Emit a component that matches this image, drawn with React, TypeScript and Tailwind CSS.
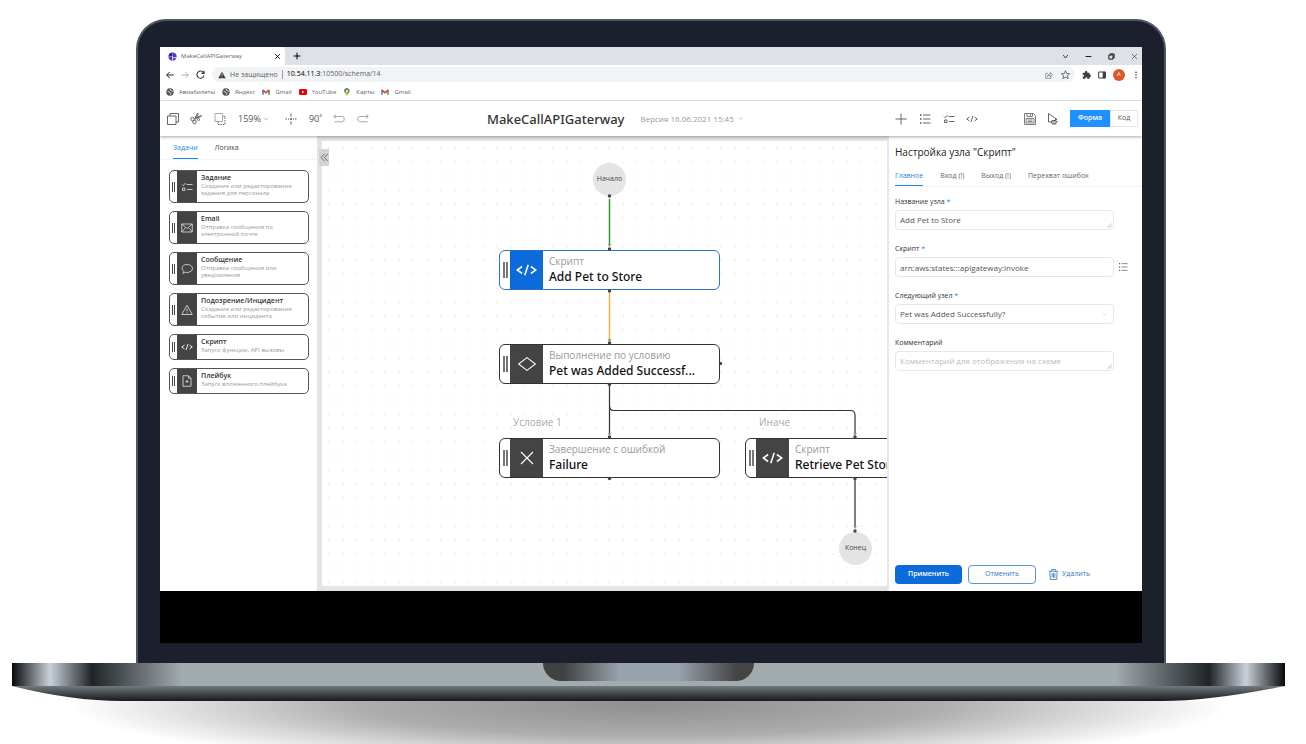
import type { ReactNode } from 'react';
import clsx from 'clsx';

interface IconProps {
  className?: string;
}

interface SvgProps extends IconProps {
  box?: string;
  children: ReactNode;
}

function Svg({ className, box = '0 0 24 24', children }: SvgProps) {
  return (
    <svg className={clsx('shrink-0', className)} viewBox={box} fill="none" stroke="currentColor" strokeWidth="1.8" aria-hidden="true">
      {children}
    </svg>
  );
}

const CodeIcon = ({ className }: IconProps) => (
  <Svg className={className} box="0 0 24 16">
    <path d="M7 4 1.500 8 7 12M17 4l5.500 4L17 12M14 2l-4 12" />
  </Svg>
);

const ChecklistIcon = ({ className }: IconProps) => (
  <Svg className={className}>
    <path d="M2 7l2.500 2.500L9 4M11 7h12M3 14h5v5H3zM12 17h11" />
  </Svg>
);

const ListIcon = ({ className }: IconProps) => (
  <Svg className={className}>
    <path d="M2 4h3M2 12h3M2 20h3" strokeWidth="3" />
    <path d="M8 4h15M8 12h15M8 20h15" />
  </Svg>
);

const MailIcon = ({ className }: IconProps) => (
  <Svg className={className}>
    <path d="M1.500 4h21v16h-21zM1.500 4 12 13 22.500 4M1.500 20 9 11M22.500 20 15 11" />
  </Svg>
);

const ChatIcon = ({ className }: IconProps) => (
  <Svg className={className}>
    <path d="M4 21l1.500-4.500C-1 11 2 3 12 3s14 8 8.500 13C17 19 12 19.500 8.500 18.500Z" />
  </Svg>
);

const WarningIcon = ({ className }: IconProps) => (
  <Svg className={className}>
    <path d="M12 2.500 1.500 21h21zM12 9v6M12 17v2" strokeLinejoin="round" />
  </Svg>
);

const FileIcon = ({ className }: IconProps) => (
  <Svg className={className}>
    <path d="M4 1.500h11l5 5v16H4zM15 1.500v5h5M12 10v6M9 13h6" />
  </Svg>
);

const DiamondIcon = ({ className }: IconProps) => (
  <Svg className={className} box="0 0 24 20">
    <path d="M12 2 22.500 10 12 18 1.500 10Z" strokeWidth="1.3" />
  </Svg>
);

const CrossIcon = ({ className }: IconProps) => (
  <Svg className={className}>
    <path d="M3 3l18 18M21 3 3 21" strokeWidth="1.6" />
  </Svg>
);

const ChevronIcon = ({ className }: IconProps) => (
  <Svg className={className}>
    <path d="M4 7l8 10 8-10" strokeWidth="2.5" />
  </Svg>
);

const UndoIcon = ({ className }: IconProps) => (
  <Svg className={className} box="0 0 24 18">
    <path d="M6 1 1.500 5 6 9M1.500 5H19q3.500 0 3.500 5t-3.500 5.500H3" />
  </Svg>
);

const GlobeIcon = ({ className }: IconProps) => (
  <Svg className={className}>
    <circle cx="12" cy="12" r="11" fill="#4b4f54" stroke="none" />
    <path d="M4 9q6 1 6 4t3 2 1 5M13 3q-2 4 2 5t6 3" stroke="#fff" strokeWidth="2.5" />
  </Svg>
);

const GmailIcon = ({ className }: IconProps) => (
  <Svg className={className} box="0 0 24 18">
    <path d="M3 17V3" stroke="#4285f4" strokeWidth="5" />
    <path d="M21 17V3" stroke="#34a853" strokeWidth="5" />
    <path d="M2 3l10 8 10-8" stroke="#ea4335" strokeWidth="5" />
  </Svg>
);

const YoutubeIcon = ({ className }: IconProps) => (
  <Svg className={className} box="0 0 24 18">
    <rect width="24" height="18" rx="4" fill="#e60000" stroke="none" />
    <path d="M9 5l7 4-7 4z" fill="#fff" stroke="none" />
  </Svg>
);

const MapsIcon = ({ className }: IconProps) => (
  <Svg className={className}>
    <path d="M12 24C11 17 4 15 4 9a8 8 0 0 1 16 0c0 6-7 8-8 15Z" fill="#34a853" stroke="none" />
    <path d="M4 9a8 8 0 0 1 8-8v8l-6 6Q4 12 4 9Z" fill="#4285f4" stroke="none" />
    <path d="M5 5q3-4 7-4v8Z" fill="#ea4335" stroke="none" />
    <path d="M6 15l6-6 2 8-2 7Z" fill="#fbbc04" stroke="none" />
    <circle cx="12" cy="9" r="3" fill="#fff" stroke="none" />
  </Svg>
);

const bookmarks = [
  { label: 'Авиабилеты', icon: GlobeIcon },
  { label: 'Яндекс', icon: GlobeIcon },
  { label: 'Gmail', icon: GmailIcon },
  { label: 'YouTube', icon: YoutubeIcon },
  { label: 'Карты', icon: MapsIcon },
  { label: 'Gmail', icon: GmailIcon },
];

const tasks = [
  { title: 'Задание', text: 'Создание или редактирование задания для персонала', icon: ChecklistIcon, tall: true },
  { title: 'Email', text: 'Отправка сообщения по электронной почте', icon: MailIcon, tall: true },
  { title: 'Сообщение', text: 'Отправка сообщения или уведомления', icon: ChatIcon, tall: true },
  { title: 'Подозрение/Инцидент', text: 'Создание или редактирование события или инцидента', icon: WarningIcon, tall: true },
  { title: 'Скрипт', text: 'Запуск функции, API вызовы', icon: CodeIcon, tall: false },
  { title: 'Плейбук', text: 'Запуск вложенного плейбука', icon: FileIcon, tall: false },
];

function BrowserBar() {
  return (
    <header className="text-[6px] text-[#5f6368]">
      <div className="flex h-[18px] items-center bg-[#dee1e6]">
        <div className="flex h-full w-[125px] items-center gap-1 rounded-tr bg-white pl-2 pr-1">
          <Svg className="size-[9px]">
            <circle cx="12" cy="12" r="11" fill="#5a35c8" stroke="none" />
            <path d="M12 1v22M1 11h11M12 15h11" stroke="#fff" strokeWidth="2" />
            <path d="M12 1v10H2Q3 2 12 1Z" fill="#2f1d9c" stroke="none" />
          </Svg>
          <span className="flex-1">MakeCallAPIGaterway</span>
          <button aria-label="Закрыть вкладку">
            <Svg className="size-[7px] text-black"><path d="M4 4l16 16M20 4 4 20" strokeWidth="3" /></Svg>
          </button>
        </div>
        <button aria-label="Новая вкладка" className="ml-2">
          <Svg className="size-2 text-black"><path d="M12 2v20M2 12h20" strokeWidth="3" /></Svg>
        </button>
        <div className="ml-auto flex items-center gap-4 pr-1 text-black">
          <button aria-label="Вкладки"><ChevronIcon className="size-[7px]" /></button>
          <button aria-label="Свернуть"><Svg className="size-[7px]"><path d="M2 12h20" strokeWidth="3" /></Svg></button>
          <button aria-label="Развернуть"><Svg className="size-[7px]"><path d="M3 7h14v14H3zM7 7V3h14v14h-4" strokeWidth="3" /></Svg></button>
          <button aria-label="Закрыть"><CrossIcon className="size-[7px]" /></button>
        </div>
      </div>

      <div className="flex h-[19px] items-center gap-[7px] pl-[6px] pr-[2px]">
        <button aria-label="Назад"><Svg className="size-2 text-black"><path d="M23 12H2M11 3l-9 9 9 9" strokeWidth="2.5" /></Svg></button>
        <button aria-label="Вперёд"><Svg className="size-2 text-gray-400"><path d="M1 12h21M13 3l9 9-9 9" strokeWidth="2.5" /></Svg></button>
        <button aria-label="Обновить"><Svg className="size-[9px] text-[#333]"><path d="M20 7a9.500 9.500 0 1 0 1.500 7M21.500 2v7h-7" strokeWidth="2.800" /></Svg></button>
        <div className="flex h-[15px] flex-1 items-center rounded-full bg-[#f1f3f4] pl-[6px] pr-[5px]">
          <Svg className="mr-1 size-2"><path d="M12 2 1 22h22z" fill="#333" stroke="none" /><path d="M12 8v7M12 17v3" stroke="#fff" strokeWidth="2" /></Svg>
          <span className="border-r border-gray-400 pr-1 text-[7px] leading-[9px]">Не защищено</span>
          <span className="ml-1 flex-1 text-[7px]"><span className="text-black">10.54.11.3</span>:10500/schema/14</span>
          <button aria-label="Поделиться" className="mr-2"><Svg className="size-2"><path d="M9 7H2v15h16v-5M7 17q1-8 9-8V4l7 7-7 6v-4q-6 0-9 4Z" /></Svg></button>
          <button aria-label="В закладки"><Svg className="size-[9px] text-[#333]"><path d="M12 2l3 7 8 1-6 5 2 8-7-4-7 4 2-8-6-5 8-1z" /></Svg></button>
        </div>
        <button aria-label="Расширения"><Svg className="size-[9px]"><path d="M2 7h6c-2-6 8-6 6 0h6v5c5-1 5 8 0 7v4h-6c1-5-6-5-5 0H2v-6c5 1 5-5 0-4Z" fill="#3c4043" stroke="none" /></Svg></button>
        <button aria-label="Панель"><Svg className="size-2 text-[#3c4043]"><path d="M2 3h20v18H2z" strokeWidth="3" /><path d="M15 3h7v18h-7z" fill="currentColor" /></Svg></button>
        <span className="flex size-3 items-center justify-center rounded-full bg-[#e2552b] text-white">А</span>
        <button aria-label="Меню" className="w-2"><Svg className="mx-auto size-2 text-black"><path d="M12 2v4M12 10v4M12 18v4" strokeWidth="3" /></Svg></button>
      </div>

      <nav className="flex h-[17px] items-center gap-[7px] border-b border-gray-200 pl-[6px]">
        {bookmarks.map(({ label, icon: Icon }, i) => (
          <a key={i} href="#" className="flex items-center gap-[5px]">
            <Icon className="size-2" />
            {label}
          </a>
        ))}
      </nav>
    </header>
  );
}

function Toolbar() {
  return (
    <div className="relative z-10 flex h-[35px] items-center bg-white text-[#555] shadow-[0_1px_3px_rgba(0,0,0,0.35)]">
      <div className="flex w-[327px] items-center pl-[7px] text-[9px]">
        <button aria-label="Копировать" className="mr-[11px]"><Svg className="size-3"><path d="M1 6h17v17H1zM6 6V1h17v17h-5" /></Svg></button>
        <button aria-label="Вырезать" className="mr-3">
          <Svg className="size-3">
            <path d="M9 11 20 8q3-1 3-3l-13 5M11 13l5-10q1-2-1-3l-5 11" />
            <circle cx="5" cy="12" r="3.500" />
            <circle cx="9" cy="18" r="3.500" />
            <circle cx="17" cy="13" r="2" />
          </Svg>
        </button>
        <button aria-label="Дублировать" className="mr-3"><Svg className="size-3 text-gray-400"><path d="M2 1h15v16H2z" /><path d="M8 18v5h14V7h-4" strokeDasharray="3 2" stroke="#555" /></Svg></button>
        <button className="mr-4 flex items-center gap-[2px]">159% <ChevronIcon className="size-[6px] text-gray-400" /></button>
        <button aria-label="Центрировать" className="mr-3"><Svg className="size-3"><path d="M12 1v6M12 17v6M1 12h3M6 12h2M16 12h2M20 12h3M12 10v4M10 12h4" strokeWidth="2" /></Svg></button>
        <button className="mr-[11px]">90˚</button>
        <button aria-label="Отменить действие" className="mr-3"><UndoIcon className="h-[9px] w-3 text-gray-400" /></button>
        <button aria-label="Повторить действие"><UndoIcon className="h-[9px] w-3 -scale-x-100 text-gray-400" /></button>
      </div>

      <div className="flex flex-1 items-center gap-4">
        <h1 className="font-['Noto_Sans','Open_Sans',sans-serif] text-[13px] font-medium leading-5 text-[#333]">MakeCallAPIGaterway</h1>
        <button className="flex items-center gap-1 text-[8px] text-[#999]">
          Версия 16.06.2021 15:45 <ChevronIcon className="size-[5px]" />
        </button>
      </div>

      <div className="flex w-[247px] items-center pr-1">
        <button aria-label="Добавить" className="mr-3"><Svg className="size-3"><path d="M12 1v22M1 12h22" /></Svg></button>
        <button aria-label="Список" className="mr-3"><ListIcon className="size-3" /></button>
        <button aria-label="Проверка" className="mr-[11px]"><ChecklistIcon className="size-3" /></button>
        <button aria-label="Код узла"><CodeIcon className="h-[10px] w-3" /></button>
        <button aria-label="Сохранить" className="ml-auto mr-[11px]"><Svg className="size-3"><path d="M2 1h17l4 4v18H1V1zM6 1v6h11V1M13 2v4M4 11h16v9H4zM7 14h10M7 17h10" strokeWidth="1.500" /></Svg></button>
        <button aria-label="Запустить" className="mr-[11px]"><Svg className="size-3"><path d="M10 18H3V1l17 12h-4" /><path d="M10 15h8v7h-8zM8 17h2M18 17h3M14 14v8" /></Svg></button>
        <button className="h-[17px] w-10 bg-[#1e90ff] text-[7px] font-semibold text-white">Форма</button>
        <button className="h-[17px] w-7 border border-gray-200 text-[7px]">Код</button>
      </div>
    </div>
  );
}

function Sidebar() {
  return (
    <aside className="w-[157px] shrink-0 bg-white">
      <div className="flex h-6 gap-[17px] border-b border-gray-100 pl-[13px] text-[7px] text-[#444]">
        <button className="border-b border-[#1e88e5] pt-[3px] text-[#1e88e5]">Задачи</button>
        <button className="border-b border-transparent pt-[3px]">Логика</button>
      </div>
      <div className="mt-[10px] flex flex-col gap-2 px-[9px]">
        {tasks.map(({ title, text, icon: Icon, tall }) => (
          <div key={title} className={clsx('flex w-[140px] overflow-hidden rounded-[5px] border border-[#555]', tall ? 'h-[33px]' : 'h-[26px]')}>
            <div className="flex w-[7px] items-center justify-center">
              <span className="h-[10px] w-[3px] border-x border-[#444]" />
            </div>
            <div className="flex w-5 items-center justify-center bg-[#444] text-gray-300">
              <Icon className={clsx('w-3', Icon === CodeIcon ? 'h-2 text-white' : 'h-3')} />
            </div>
            <div className="flex-1 pl-1 pt-[2px]">
              <p className="text-[7px] font-semibold leading-[10px] text-[#333]">{title}</p>
              <p className="text-[6px] leading-[7px] text-[#999]">{text}</p>
            </div>
          </div>
        ))}
      </div>
    </aside>
  );
}

interface NodeProps {
  kind: string;
  title: string;
  icon: ReactNode;
  place: string;
  active?: boolean;
}

function FlowNode({ kind, title, icon, place, active }: NodeProps) {
  return (
    <div className={clsx('absolute flex h-10 w-[221px] overflow-hidden rounded-md border bg-white', active ? 'border-[#2f74c0]' : 'border-[#333]', place)}>
      <div className="flex w-[10px] items-center justify-center">
        <span className="h-4 w-[5px] border-x-2 border-[#777]" />
      </div>
      <div className={clsx('flex w-[33px] items-center justify-center text-white', active ? 'bg-[#0b6bdb]' : 'bg-[#444]')}>{icon}</div>
      <div className="min-w-0 flex-1 pl-[6px] pt-[3px]">
        <p className="text-[10px] leading-[15px] text-[#999]">{kind}</p>
        <p className="whitespace-nowrap font-['Noto_Sans','Open_Sans',sans-serif] text-[12px] font-medium leading-[15px] text-[#111]">{title}</p>
      </div>
    </div>
  );
}

function Canvas() {
  return (
    <main className="relative flex min-w-0 flex-1 bg-[#e4e4e4] py-[5px] pl-[5px]">
      <div className="relative min-w-0 flex-1 overflow-hidden bg-white bg-[radial-gradient(#f3f3f3_1px,transparent_1px)] bg-[size:14px_14px]">
        <div className="absolute left-[271px] top-[22px] flex size-[33px] items-center justify-center rounded-full bg-[#e4e4e4] text-[7px] text-[#444]">Начало</div>
        <FlowNode active kind="Скрипт" title="Add Pet to Store" place="left-[177px] top-[109px]" icon={<CodeIcon className="h-[14px] w-[21px]" />} />
        <FlowNode kind="Выполнение по условию" title="Pet was Added Successf..." place="left-[177px] top-[203px]" icon={<DiamondIcon className="h-4 w-5" />} />
        <FlowNode kind="Завершение с ошибкой" title="Failure" place="left-[177px] top-[297px]" icon={<CrossIcon className="size-4" />} />
        <FlowNode kind="Скрипт" title="Retrieve Pet Store" place="left-[423px] top-[297px]" icon={<CodeIcon className="h-[14px] w-[21px]" />} />
        <div className="absolute left-[517px] top-[391px] flex size-[33px] items-center justify-center rounded-full bg-[#e4e4e4] text-[7px] text-[#444]">Конец</div>

        <span className="absolute left-[191px] top-[274px] text-[10px] leading-[15px] text-[#aaa]">Условие 1</span>
        <span className="absolute left-[437px] top-[274px] text-[10px] leading-[15px] text-[#aaa]">Иначе</span>

        <svg className="pointer-events-none absolute left-0 top-0 h-[445px] w-[565px]" viewBox="0 0 565 445" fill="none" aria-hidden="true">
          <path d="M287.500 58v46" stroke="#2c9a2c" strokeWidth="1.500" />
          <path d="M287.500 152v48" stroke="#e8b13a" strokeWidth="1.500" />
          <path d="M287.500 245v48M287.500 264q0 5.500 4 5.500H529q4 0 4 5V293" stroke="#333" strokeWidth="1.200" />
          <path d="M533 339v47" stroke="#555" strokeWidth="1.500" />
          {[[287.5, 103], [287.5, 198], [287.5, 292], [533, 292], [533, 385]].map(([x, y]) => (
            <path key={`${x}-${y}`} d={`M${x - 2} ${y}h4l-2 3z`} fill="#999" />
          ))}
          {[[287.5, 55], [287.5, 108], [287.5, 150], [287.5, 202], [287.5, 243.5], [398.5, 222.5], [287.5, 296], [287.5, 337.5], [533, 296], [533, 337.5], [533, 390]].map(([x, y]) => (
            <circle key={`${x}-${y}`} cx={x} cy={y} r="1.700" fill="#444" />
          ))}
        </svg>
      </div>
      <button aria-label="Свернуть панель" className="absolute left-[2px] top-[13px] flex h-[17px] w-[10px] items-center justify-center bg-[#d4d4d4] text-[#555]">
        <Svg className="size-[9px]"><path d="M12 2 3 12l9 10M21 2l-9 10 9 10" strokeWidth="2.2" /></Svg>
      </button>
    </main>
  );
}

const Corner = () => (
  <Svg className="pointer-events-none absolute bottom-[2px] right-[2px] size-[5px] text-gray-400">
    <path d="M2 23 23 2M12 23l11-11" strokeWidth="3" />
  </Svg>
);

interface FieldProps {
  id: string;
  label: string;
  required?: boolean;
  children: ReactNode;
}

function Field({ id, label, required, children }: FieldProps) {
  return (
    <div>
      <label htmlFor={id} className="mb-[3px] block text-[7px] font-medium leading-[10px] text-[#333]">
        {label} {required && <span className="text-[#1e88e5]">*</span>}
      </label>
      <div className="relative w-[219px]">{children}</div>
    </div>
  );
}

const control = 'block h-5 w-full resize-none appearance-none overflow-hidden rounded-sm border border-gray-200 bg-white px-1 text-[8px] leading-[18px] text-[#555] outline-none placeholder:text-[#bbb]';

function SettingsPanel() {
  return (
    <section className="flex w-[255px] shrink-0 flex-col border-l-2 border-gray-200 bg-white pl-[6px]">
      <h2 className="mt-2 text-[10px] leading-4 text-[#222]">Настройка узла "Скрипт"</h2>
      <div className="mt-1 flex h-[23px] gap-[17px] border-b border-gray-100 text-[7px] text-[#666]">
        <button className="border-b border-[#1e88e5] pt-[3px] text-[#1e88e5]">Главное</button>
        <button className="border-b border-transparent pt-[3px]">Вход (!)</button>
        <button className="border-b border-transparent pt-[3px]">Выход (!)</button>
        <button className="border-b border-transparent pt-[3px]">Перехват ошибок</button>
      </div>

      <form className="mt-[10px] flex flex-1 flex-col gap-[14px]">
        <Field id="name" label="Название узла" required>
          <textarea id="name" className={control} defaultValue="Add Pet to Store" />
          <Corner />
        </Field>
        <Field id="script" label="Скрипт" required>
          <input id="script" className={control} defaultValue="arn:aws:states:::apigateway:invoke" />
          <button type="button" aria-label="Выбрать скрипт" className="absolute -right-[14px] top-[5px] text-[#666]">
            <ListIcon className="size-[10px]" />
          </button>
        </Field>
        <Field id="next" label="Следующий узел" required>
          <select id="next" className={control}>
            <option>Pet was Added Successfully?</option>
          </select>
          <ChevronIcon className="pointer-events-none absolute right-[6px] top-[7px] size-[6px] text-gray-300" />
        </Field>
        <Field id="comment" label="Комментарий">
          <textarea id="comment" className={control} placeholder="Комментарий для отображения на схеме" />
          <Corner />
        </Field>

        <div className="mb-[7px] mt-auto flex items-center text-[7px]">
          <button type="button" className="mr-[6px] h-[19px] w-[67px] rounded-sm bg-[#0b6bdb] font-semibold text-white">Применить</button>
          <button type="button" className="mr-3 h-[19px] w-[68px] rounded-sm border border-[#5b95d6] text-[#2f74c0]">Отменить</button>
          <button type="button" className="flex items-center gap-[3px] text-[#2f74c0]">
            <Svg className="size-[11px]"><path d="M2 5h20M8 5V1h8v4M4 5l1 18h14l1-18M9 9v10M12 9v10M15 9v10" /></Svg>
            Удалить
          </button>
        </div>
      </form>
    </section>
  );
}

export default function App() {
  return (
    <div className="min-h-screen overflow-hidden bg-white pl-3 pr-[21px] pt-[19px] font-['Open_Sans','Noto_Sans',sans-serif]">
      {/* Lid */}
      <div className="ml-[124px] mr-[119px] rounded-t-[30px] border-x-2 border-t-2 border-[#4d5664] bg-[#1b202c] px-[22px] pb-5 pt-[26px]">
        <div className="overflow-hidden bg-white">
          <BrowserBar />
          <Toolbar />
          <div className="flex min-h-[455px]">
            <Sidebar />
            <Canvas />
            <SettingsPanel />
          </div>
          <div className="h-[52px] bg-black" />
        </div>
      </div>

      {/* Base */}
      <div className="flex h-[23px] justify-center bg-[linear-gradient(90deg,#08090a_0,#c8d1da_38px,#202427_80px,#a2abae_170px,#a2abae_calc(100%-170px),#202427_calc(100%-76px),#c8d1da_calc(100%-39px),#08090a_100%)]">
        <div className="h-[18px] w-[211px] rounded-b-[18px] bg-[linear-gradient(90deg,#404242,#404242_10%,#98a2ac_36%,#98a2ac_64%,#444_92%)]" />
      </div>
      <svg className="block h-[15px] w-full" viewBox="0 0 1273 15" preserveAspectRatio="none" aria-hidden="true">
        <defs>
          <linearGradient id="underside" x1="0" y1="0" x2="0" y2="1">
            <stop offset="0" stopColor="#727a7e" />
            <stop offset="1" stopColor="#17181b" />
          </linearGradient>
        </defs>
        <path d="M0 0H1273Q1200 15 1150 15H110Q60 15 0 0Z" fill="url(#underside)" />
      </svg>
      <div className="h-[43px] bg-[radial-gradient(ellipse_580px_62px_at_50%_4px,rgba(0,0,0,0.44),rgba(0,0,0,0.32)_50%,transparent)]" />
    </div>
  );
}
